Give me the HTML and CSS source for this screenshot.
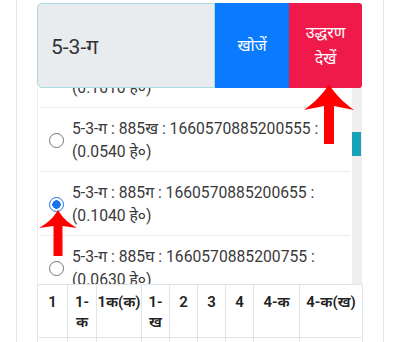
FILE: index.html
```
<!doctype html>
<html lang="hi">
    <head>
        <meta charset="utf-8">
        <title>खसरा खोज</title>
        <meta name="viewport" content="width=device-width, initial-scale=1">
        <link rel="stylesheet" href="styles.css">
    </head>
    <body>
        <main class="card">
            <div class="search">
                <div class="search-input">5-3-ग</div>
                <button class="btn btn-find">खोजें</button>
                <button class="btn btn-view">उद्धरण<br>देखें</button>
            </div>

            <div class="list-wrap">
                <div class="list">
                    <div class="list-inner">
                        <label class="item">
                            <span class="radio"></span>
                            <span class="item-text">5-3-ग : 885क : 1660570885200455 :<br>(0.1010 हे०)</span>
                        </label>
                        <label class="item">
                            <span class="radio"></span>
                            <span class="item-text">5-3-ग : 885ख : 1660570885200555 :<br>(0.0540 हे०)</span>
                        </label>
                        <label class="item">
                            <span class="radio checked"></span>
                            <span class="item-text">5-3-ग : 885ग : 1660570885200655 :<br>(0.1040 हे०)</span>
                        </label>
                        <label class="item">
                            <span class="radio"></span>
                            <span class="item-text">5-3-ग : 885घ : 1660570885200755 :<br>(0.0630 हे०)</span>
                        </label>
                    </div>
                </div>
                <div class="scroll-track">
                    <div class="scroll-thumb"></div>
                </div>
            </div>

            <table class="grid">
                <colgroup>
                    <col style="width:30px">
                    <col style="width:29px">
                    <col style="width:45px">
                    <col style="width:28px">
                    <col style="width:28px">
                    <col style="width:28px">
                    <col style="width:28px">
                    <col style="width:46px">
                    <col style="width:63px">
                </colgroup>
                <thead>
                    <tr>
                        <th>1</th>
                        <th>1-<br>क</th>
                        <th>1क(क)</th>
                        <th>1-<br>ख</th>
                        <th>2</th>
                        <th>3</th>
                        <th>4</th>
                        <th>4-क</th>
                        <th>4-क(ख)</th>
                    </tr>
                </thead>
                <tbody>
                    <tr>
                        <td>&nbsp;</td><td></td><td></td><td></td><td></td><td></td><td></td><td></td><td></td>
                    </tr>
                </tbody>
            </table>

            <!-- red arrows from the tutorial screenshot -->
            <svg class="arrow arrow-top" width="52" height="60" viewBox="0 0 52 60">
                <path d="M26 0 C32 10 40 18 51 26 L31 22 L31 60 L21 60 L21 22 L1 26 C12 18 20 10 26 0 Z" fill="#ff0000"/>
            </svg>
            <svg class="arrow arrow-radio" width="40" height="46" viewBox="0 0 40 46">
                <path d="M20 0 C24 7 30 13 39 18 L24.5 16 L24.5 46 L15.5 46 L15.5 16 L1 18 C10 13 16 7 20 0 Z" fill="#ff0000"/>
            </svg>
        </main>
    </body>
</html>
```

FILE: styles.css
```
* {
    box-sizing: border-box;
}

body {
    margin: 0;
    background: #fff;
    font-family: Roboto, "Noto Sans", sans-serif;
    color: #333;
}

.card {
    position: relative;
    height: 342px;
    margin: 0 16px;
    padding: 3px 21px 0 20px;
    border-left: 1px solid #e4e4e4;
    border-right: 1px solid #e4e4e4;
    overflow: hidden;
}

.search {
    display: flex;
    height: 85px;
}

.search-input {
    flex: 1;
    display: flex;
    align-items: center;
    padding-left: 13px;
    font-size: 21px;
    color: #333;
    background: #e8ecef;
    border: 1px solid #a9d9e3;
    border-radius: 5px 0 0 5px;
}

.btn {
    border: 0;
    margin: 0;
    color: #fff;
    font-family: inherit;
    font-size: 16px;
    line-height: 26px;
    text-align: center;
    padding: 0;
}

.btn-find {
    width: 74px;
    background: #0a7bff;
}

.btn-view {
    width: 73px;
    background: #f01a4a;
    border-radius: 0 3px 3px 0;
}

.list-wrap {
    display: flex;
    height: 196px;
    border-left: 1px solid #ececec;
}

.list {
    flex: 1;
    overflow: hidden;
}

.list-inner {
    margin: -44px 2px 0;
}

.item {
    display: flex;
    align-items: center;
    padding: 9px 0 8px;
    border-bottom: 1px solid #ececec;
}

.radio {
    flex: none;
    width: 15px;
    height: 15px;
    margin: 0 8px 0 9px;
    border: 1.5px solid #757575;
    border-radius: 50%;
}

.radio.checked {
    border-color: #1a73e8;
    background: radial-gradient(circle, #1a73e8 0 4px, #fff 4.5px);
}

.item-text {
    font-size: 15.7px;
    line-height: 23px;
    color: #3a3a3a;
    white-space: nowrap;
}

.scroll-track {
    width: 10px;
    background: #efefef;
}

.scroll-thumb {
    width: 9px;
    height: 24px;
    margin-top: 44px;
    background: #17a2b8;
}

.grid {
    width: 325px;
    table-layout: fixed;
    border-collapse: collapse;
    font-size: 15px;
    color: #222;
}

.grid th,
.grid td {
    border: 1px solid #e2e5e8;
    padding: 7px 0 5px;
    line-height: 20px;
    text-align: center;
    vertical-align: top;
    white-space: nowrap;
}

.grid th {
    font-weight: 600;
}

.arrow {
    position: absolute;
}

.arrow-top {
    left: 286px;
    top: 84px;
}

.arrow-radio {
    left: 21px;
    top: 210px;
}
```
